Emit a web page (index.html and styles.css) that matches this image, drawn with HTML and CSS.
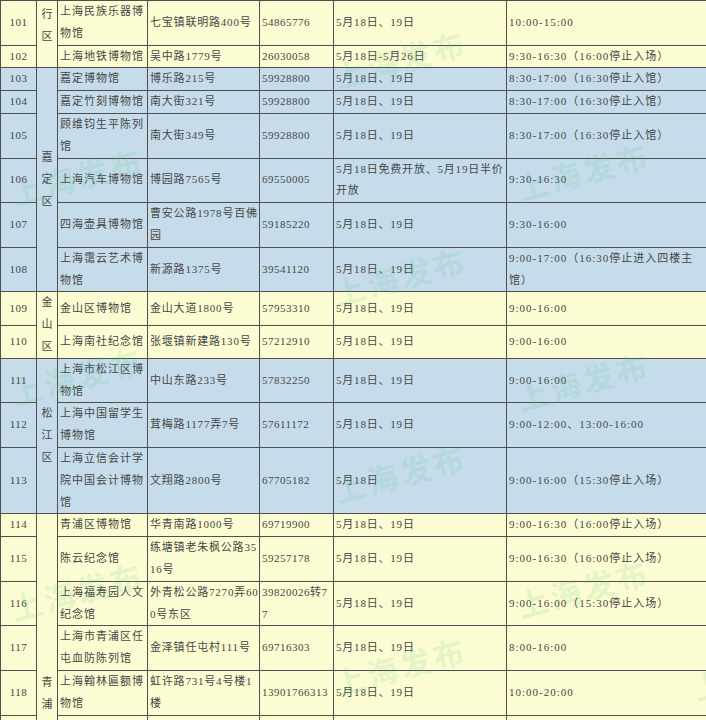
FILE: index.html
```html
<!DOCTYPE html>
<html lang="zh-CN">
<head>
<meta charset="utf-8">
<title>博物馆开放信息</title>
<link rel="stylesheet" href="styles.css">
</head>
<body>
<div class="page">
<table class="list">
<colgroup>
<col class="w-no"><col class="w-dist"><col class="w-name"><col class="w-addr"><col class="w-tel"><col class="w-date"><col class="w-time">
</colgroup>
<tbody>
<tr class="y"><td class="no">101</td><td class="dist top" rowspan="2">行<br>区</td><td class="name">上海民族乐器博<br>物馆</td><td class="addr">七宝镇联明路400号</td><td class="tel">54865776</td><td class="date">5月18日、19日</td><td class="time">10:00-15:00</td></tr>
<tr class="y"><td class="no">102</td><td class="name">上海地铁博物馆</td><td class="addr">吴中路1779号</td><td class="tel">26030058</td><td class="date">5月18日-5月26日</td><td class="time">9:30-16:30（16:00停止入场）</td></tr>
<tr class="b"><td class="no">103</td><td class="dist" rowspan="6">嘉<br>定<br>区</td><td class="name">嘉定博物馆</td><td class="addr">博乐路215号</td><td class="tel">59928800</td><td class="date">5月18日、19日</td><td class="time">8:30-17:00（16:30停止入馆）</td></tr>
<tr class="b"><td class="no">104</td><td class="name">嘉定竹刻博物馆</td><td class="addr">南大街321号</td><td class="tel">59928800</td><td class="date">5月18日、19日</td><td class="time">8:30-17:00（16:30停止入馆）</td></tr>
<tr class="b"><td class="no">105</td><td class="name">顾维钧生平陈列<br>馆</td><td class="addr">南大街349号</td><td class="tel">59928800</td><td class="date">5月18日、19日</td><td class="time">8:30-17:00（16:30停止入馆）</td></tr>
<tr class="b"><td class="no">106</td><td class="name">上海汽车博物馆</td><td class="addr">博园路7565号</td><td class="tel">69550005</td><td class="date">5月18日免费开放、5月19日半价<br>开放</td><td class="time">9:30-16:30</td></tr>
<tr class="b"><td class="no">107</td><td class="name">四海壶具博物馆</td><td class="addr">曹安公路1978号百佛<br>园</td><td class="tel">59185220</td><td class="date">5月18日、19日</td><td class="time">9:30-16:00</td></tr>
<tr class="b"><td class="no">108</td><td class="name">上海霭云艺术博<br>物馆</td><td class="addr">新源路1375号</td><td class="tel">39541120</td><td class="date">5月18日、19日</td><td class="time">9:00-17:00（16:30停止进入四楼主<br>馆）</td></tr>
<tr class="y"><td class="no">109</td><td class="dist" rowspan="2">金<br>山<br>区</td><td class="name">金山区博物馆</td><td class="addr">金山大道1800号</td><td class="tel">57953310</td><td class="date">5月18日、19日</td><td class="time">9:00-16:00</td></tr>
<tr class="y"><td class="no">110</td><td class="name">上海南社纪念馆</td><td class="addr">张堰镇新建路130号</td><td class="tel">57212910</td><td class="date">5月18日、19日</td><td class="time">9:00-16:00</td></tr>
<tr class="b"><td class="no">111</td><td class="dist" rowspan="3">松<br>江<br>区</td><td class="name">上海市松江区博<br>物馆</td><td class="addr">中山东路233号</td><td class="tel">57832250</td><td class="date">5月18日、19日</td><td class="time">9:00-16:00</td></tr>
<tr class="b"><td class="no">112</td><td class="name">上海中国留学生<br>博物馆</td><td class="addr">茸梅路1177弄7号</td><td class="tel">57611172</td><td class="date">5月18日、19日</td><td class="time">9:00-12:00、13:00-16:00</td></tr>
<tr class="b"><td class="no">113</td><td class="name">上海立信会计学<br>院中国会计博物<br>馆</td><td class="addr">文翔路2800号</td><td class="tel">67705182</td><td class="date">5月18日</td><td class="time">9:00-16:00（15:30停止入场）</td></tr>
<tr class="y"><td class="no">114</td><td class="dist" rowspan="9">青<br>浦<br>区</td><td class="name">青浦区博物馆</td><td class="addr">华青南路1000号</td><td class="tel">69719900</td><td class="date">5月18日、19日</td><td class="time">9:00-16:30（16:00停止入场）</td></tr>
<tr class="y"><td class="no">115</td><td class="name">陈云纪念馆</td><td class="addr">练塘镇老朱枫公路35<br>16号</td><td class="tel">59257178</td><td class="date">5月18日、19日</td><td class="time">9:00-16:30（16:00停止入场）</td></tr>
<tr class="y"><td class="no">116</td><td class="name">上海福寿园人文<br>纪念馆</td><td class="addr">外青松公路7270弄60<br>0号东区</td><td class="tel">39820026转7<br>7</td><td class="date">5月18日、19日</td><td class="time">9:00-16:00（15:30停止入场）</td></tr>
<tr class="y"><td class="no">117</td><td class="name">上海市青浦区任<br>屯血防陈列馆</td><td class="addr">金泽镇任屯村111号</td><td class="tel">69716303</td><td class="date">5月18日、19日</td><td class="time">8:00-16:00</td></tr>
<tr class="y"><td class="no">118</td><td class="name">上海翰林匾额博<br>物馆</td><td class="addr">虹许路731号4号楼1<br>楼</td><td class="tel">13901766313</td><td class="date">5月18日、19日</td><td class="time">10:00-20:00</td></tr>
<tr class="y tall"><td class="no"></td><td class="name"></td><td class="addr"></td><td class="tel"></td><td class="date"></td><td class="time"></td></tr>
<tr class="y tall"><td class="no"></td><td class="name"></td><td class="addr"></td><td class="tel"></td><td class="date"></td><td class="time"></td></tr>
<tr class="y tall"><td class="no"></td><td class="name"></td><td class="addr"></td><td class="tel"></td><td class="date"></td><td class="time"></td></tr>
<tr class="y tall"><td class="no"></td><td class="name"></td><td class="addr"></td><td class="tel"></td><td class="date"></td><td class="time"></td></tr>
</tbody>
</table>
<div class="wm wm1" aria-hidden="true">上海发布</div>
<div class="wm wm2" aria-hidden="true">上海发布</div>
<div class="wm wm3" aria-hidden="true">上海发布</div>
<div class="wm wm4" aria-hidden="true">上海发布</div>
<div class="wm wm5" aria-hidden="true">上海发布</div>
<div class="wm wm6" aria-hidden="true">上海发布</div>
<div class="wm wm7" aria-hidden="true">上海发布</div>
<div class="wm wm8" aria-hidden="true">上海发布</div>
<div class="wm wm9" aria-hidden="true">上海发布</div>
<div class="wm wm10" aria-hidden="true">上海发布</div>
<div class="wm wm11" aria-hidden="true">上海发布</div>
</div>
</body>
</html>
```

FILE: styles.css
```css
html, body {
  margin: 0;
  padding: 0;
  background: #ffffff;
}

.page {
  position: relative;
  width: 706px;
  height: 720px;
  overflow: hidden;
  font-family: "Liberation Serif", "Noto Sans CJK SC", serif;
  font-size: 11px;
  color: #474747;
}

.list {
  border-collapse: collapse;
  table-layout: fixed;
  width: 710px;
}

.w-no { width: 36px; }
.w-dist { width: 21px; }
.w-name { width: 90px; }
.w-addr { width: 112px; }
.w-tel { width: 74px; }
.w-date { width: 173px; }
.w-time { width: 204px; }

.list td {
  border: 1px solid #4f4f4f;
  padding: 0 0 0 2px;
  line-height: 21.8px;
  vertical-align: middle;
  white-space: nowrap;
  overflow: hidden;
  letter-spacing: 1px;
  text-align: left;
}

.y td { background: #fcfcd2; }
.b td { background: #c6dcea; }

.list td.no {
  text-align: center;
  padding: 0;
  letter-spacing: 0.5px;
}

.list td.dist {
  text-align: center;
  padding: 0;
  letter-spacing: 0;
}

.list td.dist.top {
  vertical-align: top;
  padding-top: 3px;
}

.list td.addr { letter-spacing: 0.8px; }
.list td.tel { letter-spacing: 0.5px; }
.list td.date { letter-spacing: 0.8px; }

.tall td { height: 44px; }

.wm {
  position: absolute;
  width: 140px;
  text-align: center;
  font-family: "Noto Sans CJK SC", sans-serif;
  font-weight: 700;
  font-size: 31px;
  line-height: 1;
  letter-spacing: 3px;
  color: rgba(60, 190, 120, 0.15);
  transform: rotate(-15deg);
  transform-origin: 50% 50%;
  white-space: nowrap;
  pointer-events: none;
}

.wm1 { left: 7px; top: 160px; }
.wm2 { left: 7px; top: 360px; }
.wm3 { left: 7px; top: 575px; }
.wm4 { left: 330px; top: 43px; }
.wm5 { left: 330px; top: 260px; }
.wm6 { left: 330px; top: 457px; }
.wm7 { left: 330px; top: 650px; }
.wm8 { left: 513px; top: 155px; }
.wm9 { left: 513px; top: 365px; }
.wm10 { left: 513px; top: 572px; }
.wm11 { left: 689px; top: 655px; }
```
